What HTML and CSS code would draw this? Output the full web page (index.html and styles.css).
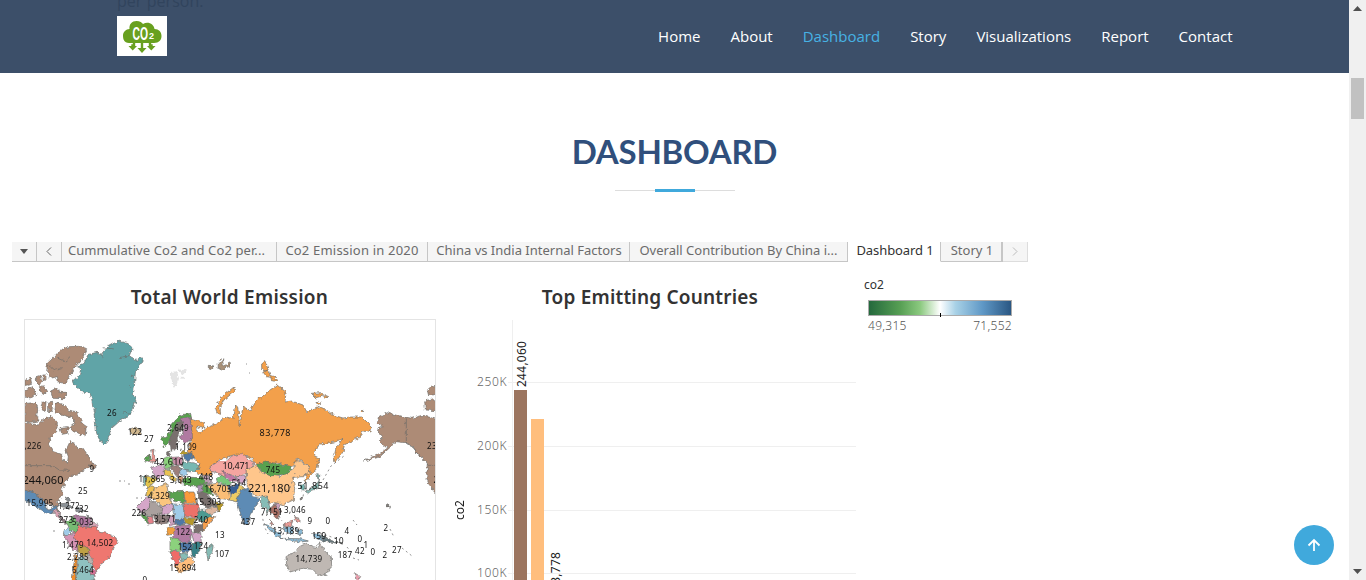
FILE: index.html
```html
<!DOCTYPE html>
<html lang="en">
<head>
<meta charset="utf-8">
<title>CO2 Dashboard</title>
<link rel="stylesheet" href="styles.css">
</head>
<body>
<div class="window">
<div class="page">
  <header class="header">
    <p class="intro-tail">per person.</p>
    <a class="logo" href="#"><svg width="50" height="40" viewBox="0 0 50 40">
      <path fill="#68a01f" d="M12 27C7 27 6 23 6 19.500C6 16 9 13 12.500 13C12 8 15 5 19.500 5C23 5 25 6.500 26 8C31 5 37 8 37.500 13C42 13 44.500 16 44.500 20C44.500 24 42 27 37 27Z"/>
      <path fill="none" stroke="#68a01f" stroke-width="2.400" d="M17 26.500V29.500H15.500V32M25 26V34M33 26.500V29.500H34.500V32"/>
      <path fill="#68a01f" d="M11.500 30H20L15.700 34.500ZM20.500 32H29.500L25 37ZM30 30H38.500L34.300 34.500Z"/>
      <text x="15.500" y="23.500" textLength="15.500" lengthAdjust="spacingAndGlyphs" class="logo-text">CO</text><text x="32" y="23" class="logo-sub">2</text>
    </svg></a>
    <nav class="nav"><a>Home</a><a>About</a><a class="current">Dashboard</a><a>Story</a><a>Visualizations</a><a>Report</a><a>Contact</a></nav>
  </header>
  <h2 class="section-title">DASHBOARD</h2>
  <div class="divider"><i></i></div>
  <section class="viz">
    <div class="tabs">
      <span class="tab w24"><svg width="8" height="5"><path d="M0 0H8L4 5Z" fill="#555"/></svg></span>
      <span class="tab w25"><svg width="6" height="9" viewBox="0 0 6 9"><path d="M5 .5L1 4.500L5 8.500" fill="none" stroke="#666"/></svg></span>
      <span class="tab t1"><b>Cummulative Co2 and Co2 per...</b></span>
      <span class="tab t2"><b>Co2 Emission in 2020</b></span>
      <span class="tab t3"><b>China vs India Internal Factors</b></span>
      <span class="tab t4"><b>Overall Contribution By China i...</b></span>
      <span class="tab t5 active"><b>Dashboard 1</b></span>
      <span class="tab t6"><b>Story 1</b></span>
      <span class="tab t7"><svg width="6" height="9" viewBox="0 0 6 9"><path d="M1 .5L5 4.500L1 8.500" fill="none" stroke="#bbb"/></svg></span>
    </div>
    <div class="panels">
      <div class="map-panel">
        <h3 class="map-title">Total World Emission</h3>
        <svg class="map" viewBox="24 319 412 261" width="412" height="261">
          <defs>
            <filter id="coast" x="-5%" y="-5%" width="110%" height="110%" color-interpolation-filters="sRGB"><feTurbulence type="fractalNoise" baseFrequency=".28" numOctaves="2" seed="4"/><feDisplacementMap in="SourceGraphic" scale="4.500" xChannelSelector="R" yChannelSelector="G"/></filter>
            <clipPath id="frame"><rect x="25" y="320" width="410" height="260"/></clipPath>
          </defs>
          <rect x="24.500" y="319.500" width="411" height="280" fill="#fff" stroke="#e4e4e4"/>
          <g clip-path="url(#frame)"><g class="land" filter="url(#coast)">
            <g transform="translate(20 315) scale(.33333)" fill="#ad8b76">
              <path d="M100 128L120 106L145 95L175 94L200 104L190 128L165 155L148 185L138 205L115 202L112 185L92 190L80 168L82 145Z"/>
              <path d="M84 150L100 164L125 158M110 128L136 140L150 128" fill="none"/>
              <path d="M92 228L112 218L116 232L138 232L134 251L98 250Z"/>
              <path d="M48 185L58 182L68 198L60 212L50 200ZM15 196L32 190L35 208L15 212ZM14 226L35 215L48 238L35 248L14 250ZM58 218L70 212L80 230L68 240ZM68 180L78 180L78 195L70 196ZM66 262L78 260L76 290L62 282ZM86 264L98 262L96 288L86 294Z"/>
              <path d="M14 266L48 262L54 282L50 300L58 318L30 322L14 318Z"/>
              <path d="M108 264L130 268L145 285L168 290L185 318L198 338L195 366L180 356L160 350L150 332L166 325L158 308L130 300L104 290Z"/>
              <path d="M120 340L145 338L142 355L126 358Z"/>
              <path d="M-5 322L30 326L55 330L75 310L98 306L112 322L110 350L90 368L86 390L100 410L125 418L132 440L142 445L145 425L138 405L150 380L165 385L172 400L188 398L210 430L218 447L210 458L185 468L170 480L150 482L135 505L125 522L128 540L112 562L116 590L100 570L70 565L48 570L-5 530Z"/>
              <path d="M12 452H98L118 465L150 466" fill="none"/>
              <path d="M208 450L220 444L228 458L210 460Z"/>
            </g>
            <g transform="translate(20 315) scale(.33333)">
              <path fill="#60a4a7" d="M160 195L178 184L182 160L170 154L190 145L205 118L232 112L240 122L262 96L295 78L325 86L336 102L328 122L350 138L362 128L370 134L356 160L346 170L344 205L340 240L348 258L330 300L300 318L275 340L262 378L254 388L240 378L230 355L226 320L222 300L226 285L218 275L215 250L210 235L185 230L172 215L162 208Z"/>
              <path fill="none" d="M248 98L285 102M232 112L250 128M298 128L328 122M332 180L342 184M330 215L340 220M310 290L332 296"/>
              <path fill="#d1b88f" d="M330 342L345 336L362 343L362 355L340 360L330 352Z"/>
            </g>
            <g transform="translate(20 445) scale(.33333)">
              <path fill="#5d8bb5" d="M-5 130L40 143L55 155L75 168L78 190L92 196L100 182L114 184L104 204L82 205L58 193L38 178L12 165L-5 160Z"/>
              <path fill="#d7a0b1" d="M94 198L108 194L122 205L118 220L108 211Z"/>
              <path fill="#8f7b84" d="M118 208L128 222L145 232L142 238L120 224Z"/>
              <path fill="#8b9196" d="M112 178L140 174L160 188L140 190ZM166 190L185 188L195 198L170 200ZM136 156L148 165L144 174ZM200 206L206 212L205 222Z"/>
              <path fill="#77bb73" d="M140 232L158 213L170 230L178 242L172 265L150 255Z"/>
              <path fill="#b07aa1" d="M160 212L190 214L215 222L206 246L185 248L178 238L168 228Z"/>
              <path fill="#d7a7b7" d="M214 228L236 240L228 250L208 248Z"/>
              <path fill="#a0cbe8" d="M132 257L145 248L156 258L142 272L130 268Z"/>
              <path fill="#d593b4" d="M130 270L144 274L160 262L170 280L175 305L172 322L154 308L140 288Z"/>
              <path fill="#ef7770" d="M162 262L178 244L210 248L232 246L238 262L258 264L285 275L292 290L282 308L272 335L250 350L232 378L215 362L220 345L206 325L208 312L178 300L164 280Z"/>
              <path fill="#bfa145" d="M172 300L190 300L210 315L205 328L190 335L175 324Z"/>
              <path fill="#bab0ac" d="M204 328L218 345L212 355L195 342Z"/>
              <path fill="#d37295" d="M218 372L232 380L220 394L212 382Z"/>
              <path fill="#8fc1c0" d="M176 336L194 338L212 355L220 362L212 380L225 405L165 410Z"/>
              <path fill="#f28e2b" d="M165 325L172 340L166 410L156 410Z"/>
            </g>
            <path fill="#f3a04b" d="M190 418L203 422L205 427L200 428L196 426L199 433L207 427L217 423L227 417L233 419L234 408L237 405L239 415L239 427L241 418L243 407L250 411L255 402L264 395L270 390L277 385L286 392L285 402L292 401L303 405L307 412L317 407L328 411L333 415L343 418L350 417L362 417L372 427L371 432L365 430L362 432L360 437L350 442L344 445L343 452L335 463L334 457L336 448L343 438L335 442L320 444L313 455L319 458L317 468L305 482L306 475L309 467L298 458L292 467L277 463L267 463L257 465L250 457L237 454L223 458L212 465L212 476L203 475L195 472L200 463L188 455L189 445L192 433Z"/>
            <g fill="#f3a04b" transform="translate(160 340) scale(.33333)">
              <path d="M166 205L185 170L218 144L228 150L190 182L180 205L182 220L170 218ZM305 72L315 65L325 88L316 95L305 86ZM308 95L325 90L332 112L320 110ZM332 106L345 110L350 124L334 122Z"/>
              <path fill="#a99179" d="M145 76L162 78L155 86L145 83ZM175 70L188 56L190 78L212 68L210 78L184 90L174 84Z"/>
              <path fill="#e4e4e4" class="pale" d="M30 98L48 95L55 112L45 142L35 120ZM56 90L82 92L66 104ZM62 112L72 112L70 120Z"/>
            </g>
            <g fill="#f3a04b" transform="translate(300 340) scale(.33333)"><path d="M34 160L62 158L70 168L48 174ZM72 164L86 170L78 176ZM48 184L62 190L52 194ZM182 215L194 214L188 220Z"/>
              <g fill="#ad8b76"><path d="M235 232L262 218L290 226L335 235L370 226L415 240L415 470L390 440L380 415L382 370L355 345L340 322L318 308L288 305L278 315L240 350L190 363L240 340L262 325L238 305L248 290L230 268L250 260L232 248ZM382 150L395 138L410 136V160L385 164ZM374 182L395 178L410 190V212L376 210Z"/><path fill="none" d="M319 235V310L342 325L360 350L385 376H408"/></g>
            </g>
            <g transform="translate(120 390) scale(.33333)">
              <path fill="#59a14f" d="M125 145L150 130L155 105L180 75L212 70L214 82L185 84L162 118L148 158L130 170Z"/>
              <path fill="#79706e" d="M148 150L165 112L185 86L192 105L172 145L170 175L154 184Z"/>
              <path fill="#b07aa1" d="M182 84L210 84L218 145L196 160L180 148L192 115Z"/>
              <path fill="#e9948e" d="M92 180L102 178L100 192L110 212L96 220L88 214L96 202ZM82 198L90 196L89 202Z"/>
              <path fill="#59a14f" d="M74 202L88 194L90 212L74 214Z"/>
              <path fill="#d4a6c8" d="M92 235L118 220L136 235L134 258L108 264L100 248Z"/>
              <path fill="#e3c44c" d="M74 257L108 265L98 285L82 292L73 282Z"/><path fill="#86bcb6" d="M70 260L78 260L76 286L70 284Z"/>
              <path fill="#8cd17d" d="M132 205L156 200L160 228L140 236L130 225Z"/>
              <path fill="#79706e" d="M140 186L150 182L148 198L140 198Z"/>
              <path fill="#c58ea5" d="M158 202L188 200L188 226L160 224Z"/>
              <path fill="#b6992d" d="M178 190L195 180L204 190L195 202Z"/>
              <path fill="#e9c352" d="M132 240L150 238L156 254L170 268L160 276L146 258L136 254Z"/>
              <path fill="#9d7f7b" d="M152 230L178 226L184 245L172 262L158 244Z"/>
              <path fill="#4e79a7" d="M188 198L215 186L220 208L200 215Z"/>
              <path fill="#76b7b2" d="M186 220L205 215L240 224L234 240L210 246L190 236Z"/>
              <path fill="#a0cbe8" d="M180 235L204 240L202 258L184 256Z"/>
              <path fill="#d59872" d="M178 258L192 262L182 284L174 270Z"/>
              <path fill="#59a14f" d="M188 266L215 262L252 264L262 280L232 288L190 286Z"/>
              <path fill="#bb9baf" d="M244 256L262 256L275 280L262 282Z"/>
              <path fill="#a88dae" d="M232 288L246 284L248 304L232 308Z"/>
              <path fill="#59a14f" d="M250 282L268 284L278 318L260 312L246 302Z"/>
              <path fill="#f5a5a0" d="M270 230L292 215L315 215L330 200L368 190L388 208L402 218L392 246L352 262L326 252L310 258L290 248L276 245Z"/>
              <path fill="#78c77a" d="M288 262L308 256L338 280L322 288L292 276Z"/>
              <path fill="#c277a5" d="M305 242L348 264L350 274L328 270Z"/>
              <path fill="#d4a6c8" d="M348 260L378 258L370 282L350 278Z"/>
              <path fill="#fabd76" d="M264 284L292 280L324 290L330 330L300 325L275 305Z"/>
              <path fill="#375f95" d="M324 290L362 280L344 312L330 316Z"/>
              <path fill="#edcb64" d="M330 318L348 308L360 282L372 298L350 336L328 330Z"/>
              <path fill="#79706e" d="M232 310L250 304L280 330L290 348L258 354L242 335Z"/>
              <path fill="#ddb7a0" d="M254 358L290 350L296 364L260 376Z"/><path fill="#b6992d" d="M286 335L312 342L296 364Z"/>
              <path fill="#5d8bb5" d="M362 298L384 296L398 320L420 325L412 340L390 375L384 405L372 402L350 335Z"/>
              <path fill="#fac67e" d="M96 300L140 280L146 318L158 342L128 350L92 322Z"/>
              <path fill="#efc04f" d="M76 318L86 290L104 292L94 315Z"/>
              <path fill="#59a14f" d="M148 306L192 304L194 342L160 330L146 322Z"/>
              <path fill="#fb9a3c" d="M192 306L222 306L232 340L196 340Z"/>
              <path fill="#d4a6c8" d="M50 352L82 320L92 322L88 360L60 365ZM122 352L158 340L162 362L134 376L122 372Z"/>
              <path fill="#aaa09e" d="M88 330L126 350L122 372L90 378L60 368L88 360Z"/>
              <path fill="#a0cbe8" d="M160 342L192 344L190 382L166 395L162 365Z"/>
              <path fill="#ec7169" d="M194 343L234 344L240 365L230 384L192 378Z"/>
              <path fill="#4c9a91" d="M234 366L250 360L282 382L252 400L232 385Z"/>
              <path fill="#f6a04f" d="M270 378L284 380L248 425L246 402Z"/>
              <path fill="#b6992d" d="M190 382L230 386L220 406L196 400Z"/>
              <path fill="#e6828b" d="M82 378L98 378L100 400L84 402Z"/><path fill="#59a14f" d="M58 370L82 378L82 400Z"/>
              <path fill="#8e7e7c" d="M98 374L146 376L142 400L112 402Z"/>
              <path fill="#cda0bd" d="M142 380L162 375L170 402L150 408Z"/>
              <path fill="#4e79a7" d="M162 394L190 384L194 404L170 405Z"/>
              <path fill="#f2a03f" d="M140 414L164 410L162 432L142 436Z"/>
              <path fill="#b07aa1" d="M168 408L210 404L216 425L208 460L178 455L158 440Z"/>
              <path fill="#79706e" d="M222 404L248 404L248 425L222 430Z"/>
              <path fill="#d4a6c8" d="M214 428L242 430L244 455L222 456Z"/>
              <path fill="#8cd17d" d="M150 442L176 446L182 480L150 484Z"/>
              <path fill="#4e79a7" d="M178 460L214 455L220 480L188 488Z"/>
              <path fill="#378287" d="M220 458L244 458L238 482L220 506L214 484Z"/>
              <path fill="#ef6b67" d="M150 485L178 484L180 522L166 526Z"/>
              <path fill="#86bcb6" d="M180 492L200 488L206 506L184 512Z"/>
              <path fill="#ffbe7d" d="M164 530L184 516L212 500L222 516L208 538L176 548Z"/>
              <path fill="#86bcb6" d="M258 478L280 460L276 490L264 510Z"/>
            </g>
            <g transform="translate(240 440) scale(.33333)">
              <path fill="#ffc68b" d="M20 108L18 90L48 76L68 100L120 110L160 86L170 56L205 80L210 96L192 110L158 112L164 145L160 180L130 194L105 188L92 190L65 168L45 168L22 140Z"/>
              <path fill="#59a14f" d="M48 74L78 66L110 72L156 80L140 102L92 108L68 98Z"/>
              <path fill="#86bcb6" d="M65 170L82 168L88 196L82 220L75 204L64 200ZM230 98L240 104L234 120ZM238 120L236 145L214 152L202 162L198 152L225 140Z"/>
              <path fill="#76b7b2" d="M180 132L195 132L198 150L184 150Z"/>
              <path fill="#a97065" d="M88 204L112 192L124 210L112 238L98 225Z"/>
              <path fill="#c9a0bc" d="M104 190L120 190L120 218Z"/><path fill="#e79994" d="M164 230L180 236L180 248L170 246ZM92 240L102 258L94 254ZM128 256L160 240L152 258Z"/>
              <path fill="#8ab9d5" d="M74 250L90 260L120 280L125 294L110 290L85 266ZM130 260L160 258L158 282L135 278ZM120 295L180 296L205 303L180 306ZM165 264L188 270L180 288ZM218 280L244 286L248 302L224 294Z"/>
              <path fill="#667a80" d="M245 282L270 300L305 312L280 308L246 302Z"/>
              <path fill="#bfb8b3" d="M138 350L165 336L178 320L200 310L218 320L232 322L240 308L256 335L274 350L275 380L260 402L238 408L218 388L190 385L150 396L140 375Z"/>
              <path fill="#e89dac" d="M342 398L362 410L350 426Z"/>
              <path fill="#79706e" d="M435 194L446 196L450 204ZM180 180L190 164L186 178Z"/>
            </g>
          </g>
          <g class="specks"><path d="M53 531h3M119 481h6m3 3h2M281 493l9-5 5-15M323 480l8-14 13-10M279 516l3 5M353 520l4 5M390 529l4 8M402 548l10 8M246 364h1M249 373h1M136 498h6M294 515l3 3M320 533l20 7M347 547l5 6M353 558l6 2M278 527l7 3M262 514l2 12 4 8"/></g>
          <g class="labels">
            <text x="112" y="416">26</text><text x="135" y="435">122</text><text x="149" y="442">27</text><text x="33" y="449">,226</text><text x="92" y="472">9</text><text x="83" y="494">25</text><text x="40" y="506">15,995</text><text x="69" y="509">1,272</text><text x="84" y="512">32</text><text x="66" y="523">273</text><text x="83" y="525">5,033</text><text x="73" y="548">1,479</text><text x="100" y="546">14,502</text><text x="78" y="560">2,285</text><text x="83" y="573">6,464</text><text x="145" y="583">0</text>
            <text x="178" y="431">2,649</text><text x="186" y="450">1,109</text><text x="152" y="482">11,865</text><text x="181" y="483">3,643</text><text x="206" y="480">448</text><text x="239" y="486">514</text><text x="218" y="492">16,703</text><text x="159" y="499">4,329</text><text x="208" y="505">15,303</text><text x="139" y="516">226</text><text x="165" y="522">3,571</text><text x="201" y="523">240</text><text x="183" y="535">122</text><text x="185" y="550">152</text><text x="201" y="549">124</text><text x="183" y="571">15,894</text><text x="220" y="538">13</text><text x="222" y="557">107</text>
            <text x="248" y="525">437</text><text x="273" y="473">745</text><text x="272" y="515">7,151</text><text x="295" y="513">3,046</text><text x="286" y="534">13,189</text><text x="319" y="539">159</text><text x="310" y="524">9</text><text x="328" y="524">0</text><text x="347" y="534">4</text><text x="360" y="542">0</text><text x="366" y="548">1</text><text x="339" y="544">10</text><text x="345" y="558">187</text><text x="360" y="554">42</text><text x="373" y="555">0</text><text x="386" y="531">2</text><text x="385" y="558">2</text><text x="397" y="553">27</text><text x="309" y="562">14,739</text><text x="432" y="449">23</text><text x="436" y="483">2</text>
            <g class="mid"><text x="275" y="436" textLength="31">83,778</text><text x="169" y="465" textLength="30">42,610</text><text x="236" y="469" textLength="27">10,471</text><text x="313" y="489" textLength="31">51,854</text></g>
            <g class="big"><text x="43" y="484" textLength="41">244,060</text><text x="269" y="492" textLength="42">221,180</text></g>
          </g></g>
        </svg>
      </div>
      <div class="chart-panel">
        <h3 class="chart-title">Top Emitting Countries</h3>
        <svg class="chart" viewBox="448 319 408 261" width="408" height="261">
          <path d="M508 382.500H856M508 446.500H856M508 510.500H856M508 573.500H856M512.500 320V580" stroke="#efefef" fill="none"/>
          <path d="M514 390H527V580H514Z" fill="#9c755f"/><path d="M531 419H544V580H531Z" fill="#ffbe7d"/>
          <g class="axis"><text x="477" y="386" textLength="29.500">250K</text><text x="477" y="450" textLength="29.500">200K</text><text x="477" y="514" textLength="29.500">150K</text><text x="477" y="577" textLength="29.500">100K</text></g>
          <g class="bar-labels"><text transform="translate(526 387) rotate(-90)" textLength="46">244,060</text><text transform="translate(560 591) rotate(-90)" textLength="39">83,778</text><text transform="translate(464 520) rotate(-90)" textLength="20">co2</text></g>
        </svg>
      </div>
      <aside class="legend"><p>co2</p><div class="ramp"><i></i></div><div class="range"><span>49,315</span><span>71,552</span></div></aside>
    </div>
  </section>
</div>
<div class="scrollbar"><svg width="9" height="5"><path d="M0 5H9L4.500 0Z" fill="#505050"/></svg><i></i><svg width="9" height="5"><path d="M0 0H9L4.500 5Z" fill="#505050"/></svg></div>
<a class="to-top"><svg width="14" height="14" viewBox="0 0 14 14"><path d="M7 13V2M1.500 7.500L7 2L12.500 7.500" fill="none" stroke="#fff" stroke-width="1.800"/></svg></a>
</div>
</body>
</html>
```
FILE: styles.css
```css
* { box-sizing: border-box; }
body { margin: 0; background: #fff; font-family: "Open Sans", sans-serif; overflow: hidden; }
h2, h3, p { margin: 0; }
.window { display: flex; height: 580px; position: relative; }
.page { width: 1349px; height: 580px; overflow: hidden; }
.header { height: 73px; background: #3c4f69; display: flex; align-items: center; justify-content: space-between; padding: 0 116.5px 1px 117px; position: relative; overflow: hidden; }
.intro-tail { position: absolute; left: 117px; top: -11px; font-size: 16px; line-height: 24px; letter-spacing: .05px; color: #31445d; }
.logo { display: flex; width: 50px; height: 40px; background: #fff; }
.logo-text { font: bold 18px "Liberation Sans", sans-serif; fill: #fff; }
.logo-sub { font: bold 9px "Liberation Sans", sans-serif; fill: #fff; }
.nav { display: flex; gap: 30px; font-size: 15px; font-weight: 500; color: #fff; line-height: 24px; }
.nav .current { color: #47b2e4; }
.section-title { margin-top: 58px; text-align: center; font: bold 33px/40px Lato, sans-serif; letter-spacing: -.25px; color: #304f7c; }
.divider { width: 120px; height: 3px; margin: 18px auto 0; background: linear-gradient(#ddd, #ddd) 0 1px / 100% 1px no-repeat; display: flex; justify-content: center; }
.divider i { width: 40px; height: 3px; background: #40a9dc; }
.viz { padding: 50px 0 0 12px; font-family: "Noto Sans", sans-serif; }
.tabs { display: flex; width: 1016px; height: 20px; }
.tab { display: flex; align-items: center; justify-content: center; background: #f5f5f5; border-right: 1px solid #c6c6c6; border-bottom: 1px solid #c6c6c6; color: #6b6b6b; font-size: 13px; white-space: nowrap; line-height: 17px; }
.tab b { font-weight: 400; padding-bottom: 2px; }
.w24, .w25 { width: 25px; }
.t1 { width: 215px; padding-right: 5px; letter-spacing: .1px; }
.t2 { width: 151px; letter-spacing: .2px; }
.t3 { width: 202px; padding-left: 1px; }
.t4 { width: 218px; }
.tab.active { width: 93px; background: #fff; color: #333; border-bottom-color: #fff; padding-left: 2px; letter-spacing: -.1px; }
.t6 { width: 62px; border-right-width: 2px; padding-left: 2px; }
.t7 { width: 25px; border-color: #ddd; }
.panels { display: flex; }
.map-panel { width: 436px; padding-left: 12px; }
.chart-panel { width: 408px; }
.map-title, .chart-title { height: 57px; padding-top: 22px; font-size: 19px; line-height: 26px; font-weight: 600; color: #333; text-align: center; white-space: nowrap; letter-spacing: .25px; }
.map-title { width: 411px; }
.chart-title { padding-right: 4px; letter-spacing: .2px; }
.map, .chart { display: block; }
.land { stroke: #6b6b68; stroke-width: .65px; }
.land path { vector-effect: non-scaling-stroke; }
.land .pale { stroke: #ddd; }
.specks { fill: none; stroke: #777; stroke-width: .8px; stroke-dasharray: 2 3; }
.labels { font-size: 8px; letter-spacing: .3px; text-anchor: middle; fill: #111; }
.mid { font-size: 9px; letter-spacing: 0; }
.big { font-size: 11px; letter-spacing: 0; }
.axis { font-size: 12px; font-weight: 300; fill: #666; }
.bar-labels { font-size: 12px; fill: #222; }
.legend { padding: 14px 0 0 8px; width: 160px; font-size: 12px; line-height: 18px; color: #333; }
.ramp { margin: 6px 0 0 4px; height: 16px; width: 144px; border: 1px solid #aaa; background: linear-gradient(90deg, #24693d, #579f54 22%, #8bc97f 36%, #fff 50%, #a8d1e6 61%, #5f98c6 80%, #2a5783); display: flex; justify-content: center; align-items: flex-end; }
.ramp i { width: 1px; height: 4px; background: #000; margin-bottom: -2px; }
.range { display: flex; justify-content: space-between; width: 144px; margin: 1px 0 0 4px; letter-spacing: .3px; font-weight: 300; color: #555; }
.scrollbar { width: 17px; height: 580px; background: #f0f0f0; display: flex; flex-direction: column; align-items: center; padding: 6px 0; }
.scrollbar i { width: 13px; height: 41px; background: #c1c1c1; margin: 67px 0 auto; }
.to-top { position: absolute; left: 1294px; top: 525px; width: 40px; height: 40px; border-radius: 50%; background: #40a9dc; display: flex; align-items: center; justify-content: center; }
```
